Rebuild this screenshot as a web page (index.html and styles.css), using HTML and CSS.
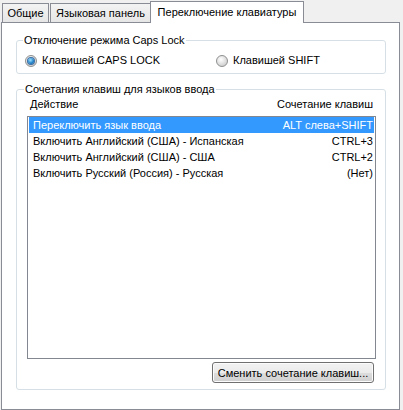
FILE: index.html
```html
<!DOCTYPE html>
<html lang="ru">

<head>
    <meta charset="UTF-8">
    <title>Языки и службы текстового ввода</title>
    <link rel="stylesheet" href="styles.css">
</head>

<body>
    <div class="tabs">
        <div class="tab tab-general">Общие</div>
        <div class="tab tab-langbar">Языковая панель</div>
        <div class="tab tab-switch active">Переключение клавиатуры</div>
    </div>

    <div class="panel">
        <fieldset class="group group-caps">
            <legend>Отключение режима Caps Lock</legend>
            <div class="radio-row">
                <label class="radio radio-caps"><span class="dot checked"></span>Клавишей CAPS LOCK</label>
                <label class="radio"><span class="dot"></span>Клавишей SHIFT</label>
            </div>
        </fieldset>

        <fieldset class="group group-keys">
            <legend>Сочетания клавиш для языков ввода</legend>
            <div class="list-head">
                <span>Действие</span>
                <span>Сочетание клавиш</span>
            </div>
            <div class="list">
                <div class="row selected"><span>Переключить язык ввода</span><span>ALT слева+SHIFT</span></div>
                <div class="row"><span>Включить Английский (США) - Испанская</span><span>CTRL+3</span></div>
                <div class="row"><span>Включить Английский (США) - США</span><span>CTRL+2</span></div>
                <div class="row"><span>Включить Русский (Россия) - Русская</span><span>(Нет)</span></div>
            </div>
            <div class="actions">
                <button class="btn">Сменить сочетание клавиш...</button>
            </div>
        </fieldset>
    </div>
</body>

</html>
```

FILE: styles.css
```css
body {
    margin: 0;
    background-color: #f0f0f0;
    font-family: 'Liberation Sans', Arial, sans-serif;
    font-size: 11px;
    color: #000;
}

/* tab strip */
.tabs {
    display: flex;
    align-items: flex-end;
    height: 22px;
    padding-left: 2px;
}

.tab {
    box-sizing: border-box;
    height: 19px;
    line-height: 18px;
    text-align: center;
    border: 1px solid #898c95;
    border-bottom: none;
    background: linear-gradient(#f3f3f3, #e6e6e6);
}

.tab-general {
    width: 47px;
    margin-right: 1px;
}

.tab-langbar {
    width: 100px;
    border-right: none;
}

.tab-switch {
    width: 154px;
}

.tab.active {
    position: relative;
    z-index: 1;
    height: 22px;
    line-height: 20px;
    margin-bottom: -1px;
    background: #fff;
}

/* page body */
.panel {
    box-sizing: border-box;
    width: 399px;
    height: 388px;
    margin-left: 1px;
    border: 1px solid #898c95;
    background-color: #fff;
    padding: 11px 13px 0 14px;
}

.group {
    margin: 0;
    border: 1px solid #d5dfe5;
    border-radius: 3px;
}

.group legend {
    line-height: 13px;
    padding: 0 1px;
}

.group-caps {
    padding: 7px 8px 6px;
}

.group-caps legend {
    margin-left: -2px;
}

.radio-row {
    display: flex;
    height: 13px;
    line-height: 13px;
}

.radio {
    display: flex;
    align-items: center;
    gap: 5px;
}

.radio-caps {
    width: 191px;
}

.dot {
    box-sizing: border-box;
    width: 12px;
    height: 12px;
    border-radius: 50%;
    border: 1px solid #8e8f8f;
    background: radial-gradient(circle at 40% 35%, #ffffff, #d4d4d4 70%);
    display: flex;
    align-items: center;
    justify-content: center;
}

.dot.checked::after {
    content: "";
    width: 6px;
    height: 6px;
    border-radius: 50%;
    background: radial-gradient(circle at 40% 35%, #9fe3ff, #1d7fc7 60%, #0c4b86);
    box-shadow: 0 0 0 1px #3a6ea5;
}

.group-keys {
    margin-top: 9px;
    padding: 2px 9px 6px 10px;
}

.group-keys legend {
    margin-left: -3px;
}

.list-head {
    display: flex;
    justify-content: space-between;
    line-height: 13px;
    padding: 0 3px;
    margin-bottom: 5px;
}

.list {
    box-sizing: border-box;
    height: 243px;
    border: 1px solid #828790;
    padding: 0 1px;
}

.row {
    display: flex;
    justify-content: space-between;
    height: 16px;
    line-height: 16px;
    padding: 0 1px 0 4px;
}

.row.selected {
    background-color: #3399ff;
    color: #fff;
}

.actions {
    display: flex;
    justify-content: flex-end;
    padding: 3px 2px 0 0;
}

.btn {
    box-sizing: border-box;
    width: 162px;
    height: 21px;
    padding: 0;
    font-family: inherit;
    font-size: 11px;
    color: #000;
    border: 1px solid #707070;
    border-radius: 3px;
    background: linear-gradient(#f2f2f2 0%, #ebebeb 50%, #dddddd 51%, #cfcfcf 100%);
    box-shadow: inset 0 0 0 1px #fcfcfc;
}
```
